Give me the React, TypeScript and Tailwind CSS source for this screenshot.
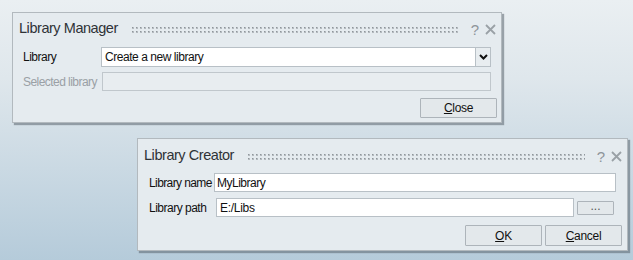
import React from "react";

const font = { fontFamily: '"Liberation Sans", Arial, sans-serif' };

function Grip({ id }: { id: string }) {
  return (
    <svg className="flex-1 h-[7px] mt-[1px]" height="7" shapeRendering="crispEdges">
      <defs>
        <pattern id={id} x="0" y="0" width="4" height="4" patternUnits="userSpaceOnUse">
          <rect x="1" y="1" width="2" height="2" fill="#b4babf" />
          <rect x="1" y="1" width="1" height="1" fill="#8f969b" />
        </pattern>
      </defs>
      <rect x="0" y="0" width="100%" height="7" fill={`url(#${id})`} />
    </svg>
  );
}

function TitleBar({ title, id }: { title: string; id: string }) {
  return (
    <div className="flex items-center h-full">
      <span className="text-[14.5px] text-[#2f3337] tracking-[-0.45px] mr-[13px] whitespace-nowrap">{title}</span>
      <Grip id={id} />
      <span className="ml-[12px] text-[15px] text-[#8e959a] leading-none">?</span>
      <svg className="ml-[6px]" width="11" height="11" viewBox="0 0 11 11">
        <path d="M1 1L10 10M10 1L1 10" stroke="#9aa1a6" strokeWidth="1.8" />
      </svg>
    </div>
  );
}

function Button({ children, className = "" }: { children: React.ReactNode; className?: string }) {
  return (
    <div
      className={
        "flex items-center justify-center border border-[#adb4ba] bg-[#e3e8eb] text-[12px] text-[#111] rounded-[1px] " +
        className
      }
    >
      {children}
    </div>
  );
}

export default function App() {
  return (
    <div
      className="relative w-[633px] h-[260px] overflow-hidden bg-[linear-gradient(180deg,#eaeff2_0%,#dfe7ec_30%,#b5cbda_100%)]"
      style={font}
    >
      {/* Library Manager */}
      <div className="absolute left-[12px] top-[12px] w-[490px] h-[111px] bg-[#e5ebef] border border-[#b2b9be] shadow-[2px_2px_1px_rgba(90,100,110,0.55)] flex flex-col">
        <div className="h-[29px] pl-[6px] pr-[5px] pt-[3px]">
          <TitleBar title="Library Manager" id="g1" />
        </div>
        <div className="flex items-center h-[20px] mt-[5px] pl-[10px] pr-[10px]">
          <span className="w-[78px] text-[12px] text-[#111] tracking-[-0.5px]">Library</span>
          <div className="flex-1 flex h-[20px]">
            <div className="flex-1 bg-white border border-[#b8c0c6] flex items-center pl-[3px] text-[12px] text-[#111] tracking-[-0.45px]">
              Create a new library
            </div>
            <div className="w-[15px] border border-l-0 border-[#b8c0c6] bg-[#e8edf0] flex items-center justify-center">
              <svg width="9" height="6" viewBox="0 0 9 6">
                <path d="M1 1L4.5 4.5L8 1" stroke="#111" strokeWidth="2" fill="none" />
              </svg>
            </div>
          </div>
        </div>
        <div className="flex items-center h-[19px] mt-[5px] pl-[10px] pr-[10px]">
          <span className="w-[79px] text-[12px] text-[#9aa0a5] tracking-[-0.55px] whitespace-nowrap">Selected library</span>
          <div className="flex-1 h-[19px] bg-[#e8edf0] border border-[#c0c7cc]" />
        </div>
        <div className="flex justify-end mt-[7px] pr-[4px]">
          <Button className="w-[77px] h-[20px] tracking-[-0.3px]">
            <span><u>C</u>lose</span>
          </Button>
        </div>
      </div>

      {/* Library Creator */}
      <div className="absolute left-[137px] top-[138px] w-[491px] h-[113px] bg-[#e5ebef] border border-[#b2b9be] shadow-[2px_2px_1px_rgba(90,100,110,0.55)] flex flex-col">
        <div className="h-[31px] pl-[6px] pr-[5px] pt-[3px]">
          <TitleBar title="Library Creator" id="g2" />
        </div>
        <div className="flex items-center h-[19px] mt-[3px] pl-[11px] pr-[11px]">
          <span className="w-[65px] text-[12px] text-[#111] tracking-[-0.6px] whitespace-nowrap">Library name</span>
          <div className="flex-1 h-[19px] bg-white border border-[#b8c0c6] flex items-center pl-[2px] text-[12px] text-[#111] tracking-[-0.5px]">
            MyLibrary
          </div>
        </div>
        <div className="flex items-center h-[19px] mt-[6px] pl-[11px] pr-[13px]">
          <span className="w-[67px] text-[12px] text-[#111] tracking-[-0.5px] whitespace-nowrap">Library path</span>
          <div className="flex-1 h-[19px] bg-white border border-[#b8c0c6] flex items-center pl-[3px] text-[12px] text-[#111] tracking-[-0.3px]">
            E:/Libs
          </div>
          <Button className="ml-[3px] w-[37px] h-[14px] text-[9px] text-[#555]">
            <span className="-mt-[3px]">...</span>
          </Button>
        </div>
        <div className="flex justify-end gap-[3px] mt-[8px] pr-[5px]">
          <Button className="w-[77px] h-[21px] tracking-[-0.3px]">
            <span><u>O</u>K</span>
          </Button>
          <Button className="w-[77px] h-[21px] tracking-[-0.3px]">
            <span><u>C</u>ancel</span>
          </Button>
        </div>
      </div>
    </div>
  );
}
